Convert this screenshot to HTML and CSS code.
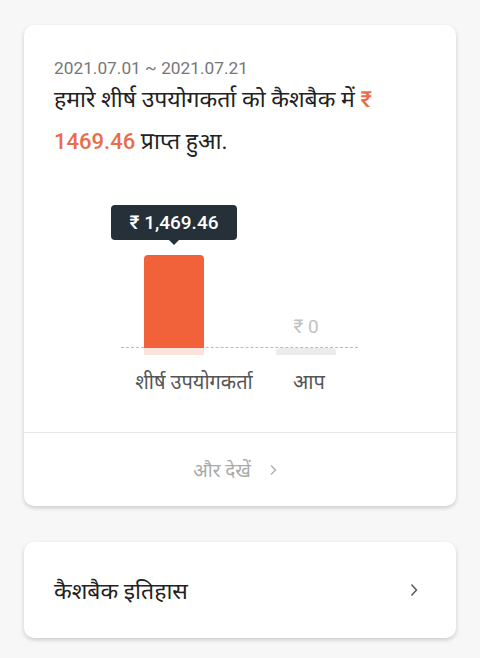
FILE: index.html
```html
<!DOCTYPE html>
<html lang="hi">
<head>
    <meta charset="UTF-8">
    <meta name="viewport" content="width=device-width, initial-scale=1.0">
    <title>कैशबैक</title>
    <link rel="stylesheet" href="styles.css">
</head>
<body>

    <div class="card summary-card">
        <div class="summary">
            <p class="period">2021.07.01 ~ 2021.07.21</p>
            <p class="headline">हमारे शीर्ष उपयोगकर्ता को कैशबैक में <span class="amount">₹</span> <span class="amount">1469.46</span> प्राप्त हुआ.</p>

            <div class="chart">
                <div class="bars">
                    <div class="bar-col">
                        <div class="tooltip">₹ 1,469.46</div>
                        <div class="bar bar-top" style="height: 93px"></div>
                    </div>
                    <div class="bar-col">
                        <div class="value">₹ 0</div>
                        <div class="bar bar-me" style="height: 0px"></div>
                    </div>
                </div>
                <div class="labels">
                    <span>शीर्ष उपयोगकर्ता</span>
                    <span>आप</span>
                </div>
            </div>
        </div>

        <div class="more">
            <span>और देखें</span>
            <svg class="chevron" width="8" height="12" viewBox="0 0 8 12"><path d="M2 1.5 L6.5 6 L2 10.5" fill="none" stroke="currentColor" stroke-width="1.2"/></svg>
        </div>
    </div>

    <div class="card history-card">
        <span>कैशबैक इतिहास</span>
        <svg class="chevron" width="8" height="14" viewBox="0 0 8 14"><path d="M1.5 1.5 L6.5 7 L1.5 12.5" fill="none" stroke="currentColor" stroke-width="1.4"/></svg>
    </div>

</body>
</html>
```

FILE: styles.css
```css
body {
    margin: 0;
    padding: 25px 24px;
    background-color: #f7f7f7;
    font-family: Roboto, "Noto Sans", sans-serif;
}

.card {
    background-color: #fff;
    border-radius: 10px;
    box-shadow: 0 2px 4px rgba(0, 0, 0, 0.18);
}

.summary {
    padding: 32px 30px 38px;
}

.period {
    margin: 0;
    font-size: 17.3px;
    color: #777;
    line-height: 22px;
}

.headline {
    margin: 0;
    font-size: 23px;
    color: #222;
    line-height: 42px;
}

.amount {
    color: #e96d4a;
    font-size: 22px;
    font-weight: 500;
}

/* chart: dashed baseline from x 121 to 358 */
.chart {
    width: 237px;
    margin: 40px 0 0 67px;
}

.bars {
    display: flex;
    align-items: flex-end;
    gap: 72px;
    height: 152px;
    padding-left: 23px;
    position: relative;
}

.bars::before {
    content: "";
    position: absolute;
    left: 0;
    right: 0;
    bottom: 7px;
    border-top: 1px dashed #bbb;
}

.bar-col {
    width: 60px;
    display: flex;
    flex-direction: column;
    align-items: center;
    position: relative;
}

.tooltip {
    position: relative;
    background-color: #253038;
    color: #fff;
    font-size: 19px;
    font-weight: 500;
    padding: 0 19px;
    line-height: 35px;
    border-radius: 4px;
    margin-bottom: 15px;
    white-space: nowrap;
}

.tooltip::after {
    content: "";
    position: absolute;
    left: 50%;
    bottom: -5px;
    margin-left: -5px;
    border-left: 5px solid transparent;
    border-right: 5px solid transparent;
    border-top: 5px solid #253038;
}

.bar {
    width: 60px;
    border-radius: 4px 4px 0 0;
    border-bottom: 7px solid;
}

.bar-top {
    background-color: #f2623a;
    border-bottom-color: #fbe3dc;
}

.bar-me {
    border-bottom-color: #ececec;
}

.value {
    font-size: 19px;
    color: #c2c2c2;
    line-height: 22px;
    margin-bottom: 10px;
    white-space: nowrap;
}

.labels {
    display: grid;
    grid-template-columns: 146px 84px;
    margin-top: 15px;
    font-size: 20px;
    line-height: 24px;
    color: #555;
    text-align: center;
    white-space: nowrap;
}

.more {
    border-top: 1px solid #e6e6e6;
    height: 73px;
    display: flex;
    align-items: center;
    justify-content: center;
    gap: 18px;
    padding-right: 10px;
    font-size: 19px;
    color: #aaa;
}

.history-card {
    margin-top: 36px;
    height: 96px;
    padding: 0 38px 0 30px;
    display: flex;
    align-items: center;
    justify-content: space-between;
    font-size: 23px;
    color: #222;
}

.history-card .chevron {
    color: #555;
}
```
